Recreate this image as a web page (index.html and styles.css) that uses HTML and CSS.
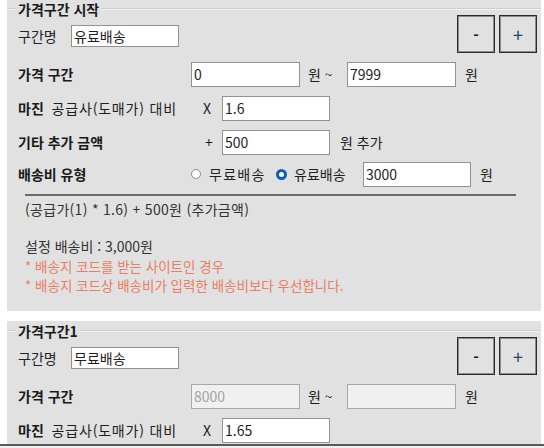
FILE: index.html
```html
<!DOCTYPE html>
<html lang="ko">
<head>
<meta charset="utf-8">
<title>가격구간</title>
<link rel="stylesheet" href="styles.css">
</head>
<body>
<div class="page">
  <section class="panel first">
    <div class="legend"><span class="legend-line short"></span><span class="legend-text">가격구간 시작</span><span class="legend-line long"></span></div>
    <div class="name-row">
      <div class="name-group"><span class="name-label">구간명</span><input class="field w108 h22" type="text" value="유료배송"></div>
      <div class="btns"><button class="btn minus" type="button">-</button><button class="btn plus" type="button">+</button></div>
    </div>
    <div class="row r2">
      <span class="label"><b>가격 구간</b></span>
      <input class="field w109" type="text" value="0">
      <span class="unit-range">원 ~</span>
      <input class="field w109" type="text" value="7999">
      <span class="unit-end">원</span>
    </div>
    <div class="row r3">
      <span class="label"><b>마진</b>&nbsp; <span class="sub">공급사(도매가) 대비</span></span>
      <span class="op op-x">X</span>
      <input class="field w108" type="text" value="1.6">
    </div>
    <div class="row r4">
      <span class="label"><b>기타 추가 금액</b></span>
      <span class="op op-plus">+</span>
      <input class="field w108" type="text" value="500">
      <span class="unit-add">원 추가</span>
    </div>
    <div class="row r5">
      <span class="label"><b>배송비 유형</b></span>
      <span class="radio"></span>
      <span class="radio-label free">무료배송</span>
      <span class="radio on"></span>
      <span class="radio-label paid">유료배송</span>
      <input class="field w108 ship" type="text" value="3000">
      <span class="unit-end">원</span>
    </div>
    <div class="separator"></div>
    <div class="summary">
      <p class="formula">(공급가(1) * 1.6) + 500원 (추가금액)</p>
      <p class="fee">설정 배송비 : 3,000원</p>
      <p class="note first-note">* 배송지 코드를 받는 사이트인 경우</p>
      <p class="note">* 배송지 코드상 배송비가 입력한 배송비보다 우선합니다.</p>
    </div>
  </section>

  <section class="panel">
    <div class="legend"><span class="legend-line short"></span><span class="legend-text">가격구간1</span><span class="legend-line long"></span></div>
    <div class="name-row">
      <div class="name-group"><span class="name-label">구간명</span><input class="field w108 h22" type="text" value="무료배송"></div>
      <div class="btns"><button class="btn minus" type="button">-</button><button class="btn plus" type="button">+</button></div>
    </div>
    <div class="row r2">
      <span class="label"><b>가격 구간</b></span>
      <input class="field w109" type="text" value="8000" disabled>
      <span class="unit-range">원 ~</span>
      <input class="field w109" type="text" value="" disabled>
      <span class="unit-end">원</span>
    </div>
    <div class="row r3">
      <span class="label"><b>마진</b>&nbsp; <span class="sub">공급사(도매가) 대비</span></span>
      <span class="op op-x">X</span>
      <input class="field w108" type="text" value="1.65">
    </div>
  </section>
</div>
<div class="frame-bottom"></div>
</body>
</html>
```

FILE: styles.css
```css
* { box-sizing: border-box; }

html, body {
  margin: 0;
  padding: 0;
  background: #ffffff;
}

body {
  width: 544px;
  height: 448px;
  overflow: hidden;
  font-family: "Noto Sans CJK KR", "Noto Sans", sans-serif;
  font-size: 14px;
  line-height: 20px;
  color: #1e1e1e;
}

.page {
  display: flex;
  flex-direction: column;
  gap: 10px;
  padding: 0 3px 0 7px;
}

.panel {
  background: #e1e1e1;
}

.panel.first {
  margin-top: -1px;
  padding-bottom: 16px;
}

/* group box legend */
.legend {
  display: flex;
  align-items: flex-start;
  height: 16px;
}

.legend-line {
  height: 0;
  margin-top: 9px;
  border-top: 1px solid #cdcdcd;
  border-bottom: 1px solid #f2f2f2;
}

.legend-line.short { width: 9px; }
.legend-line.long { flex: 1; }

.legend-text {
  padding: 0 2px;
  font-weight: 700;
  line-height: 20px;
  color: #1a1a1a;
}

/* name row with +/- buttons */
.name-row {
  display: flex;
  justify-content: space-between;
  height: 38px;
  padding: 0 4px 0 11px;
}

.name-group {
  display: flex;
  align-items: center;
  align-self: center;
  margin-top: 3px;
}

.name-label {
  width: 53px;
  color: #222;
}

.btns {
  display: flex;
  gap: 4px;
}

.btn {
  width: 38px;
  height: 38px;
  padding: 0;
  border: 1px solid #2a2a2a;
  box-shadow: inset 0 0 0 1px #8c8c8c;
  background: #e1e1e1;
  font-family: "Noto Sans CJK KR", sans-serif;
  font-size: 15px;
  font-weight: 700;
  color: #222;
  line-height: 1;
}

.btn.plus {
  font-weight: 400;
  font-size: 18px;
  color: #2d4560;
}

/* form rows */
.row {
  display: flex;
  align-items: center;
  height: 34px;
  padding-left: 11px;
  color: #1e1e1e;
}

.row.r2 { margin-top: 4px; }
.row.r5 { height: 30px; }

.label {
  flex: none;
  width: 173px;
  white-space: nowrap;
}

.label b { font-weight: 700; color: #1a1a1a; }
.label .sub { letter-spacing: 0.8px; }

.field {
  flex: none;
  height: 25px;
  padding: 0 2px;
  border: 1px solid #929292;
  background: #ffffff;
  font-family: "Noto Sans CJK KR", sans-serif;
  font-size: 14px;
  color: #1e1e1e;
  outline: none;
}

.field.h22 { height: 22px; }
.w108 { width: 108px; }
.w109 { width: 109px; }

.field:disabled {
  background: #f0f0f0;
  border-color: #a8a8a8;
  color: #a3a3a3;
}

.unit-range {
  width: 39px;
  margin-left: 8px;
}

.unit-end { margin-left: 9px; }
.unit-add { margin-left: 10px; }

.op { flex: none; }
.op-x { width: 19px; margin-left: 12px; }
.op-plus { width: 17px; margin-left: 14px; }

/* radios */
.radio {
  flex: none;
  width: 10px;
  height: 10px;
  border-radius: 50%;
  border: 1px solid #8a8a8a;
  background: #ffffff;
}

.radio.on {
  width: 11px;
  height: 11px;
  border: 3.5px solid #0b5cbd;
}

.radio-label { flex: none; }
.radio-label.free { width: 67px; margin-left: 8px; letter-spacing: 1.3px; }
.radio-label.paid { width: 56px; margin-left: 7px; }
.field.ship { margin-left: 13px; }

/* summary */
.separator {
  height: 2px;
  margin: 5px 25px 0 18px;
  background: #6a6a6a;
}

.summary {
  padding-left: 18px;
}

.summary p { margin: 0; }

.formula {
  margin-top: 3px !important;
  color: #333;
  letter-spacing: 0.3px;
}

.fee {
  margin-top: 17px !important;
  color: #333;
}

.note {
  font-size: 13.5px;
  line-height: 19px;
  letter-spacing: 0;
  color: #ec7c62;
}

.note.first-note { margin-top: 1px; }

.frame-bottom {
  position: fixed;
  left: 0;
  right: 0;
  bottom: 0;
  height: 4px;
  border-top: 2px solid #5a5a5a;
  background: #f0f0f0;
}
```
